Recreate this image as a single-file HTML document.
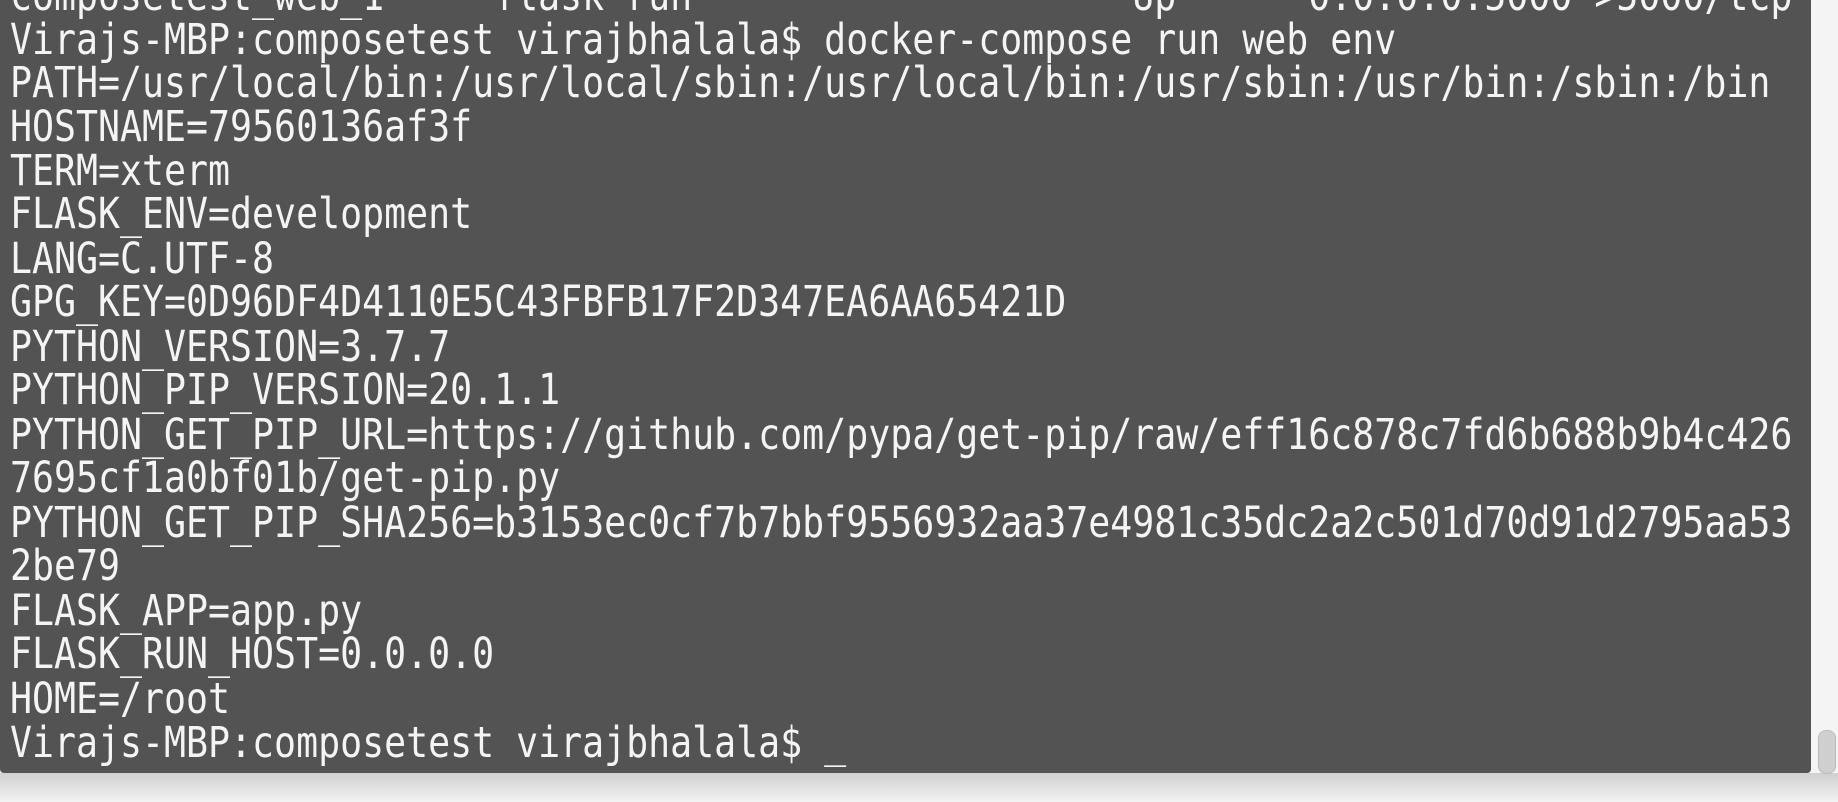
<!DOCTYPE html>
<html><head><meta charset="utf-8"><style>
html,body{margin:0;padding:0;width:1838px;height:802px;overflow:hidden;background:#e6e6e6;}
.bg{position:absolute;left:0;top:773px;width:1838px;height:29px;background:linear-gradient(#d0d0d0,#f2f2f2);}
.right{position:absolute;left:1811px;top:0;width:27px;height:773px;background:#f4f4f4;}
.thumb{position:absolute;left:1818px;top:730px;width:16px;height:42px;border-radius:8px;background:#cfcfcf;border:1px solid #bbb;}
.term{position:absolute;left:0;top:0;width:1811px;height:773px;background:#535353;border-radius:0 0 4px 4px;overflow:hidden;}
.l{position:absolute;left:10px;font-family:"DejaVu Sans Mono","Liberation Mono",monospace;font-size:43px;color:#f4f4f4;line-height:44px;white-space:pre;transform:scaleX(0.85);transform-origin:0 0;}
</style></head><body>
<div class="bg"></div>
<div class="right"></div>
<div class="thumb"></div>
<div class="term">
<div class="l" style="top:-26px">composetest_web_1     flask run                    Up      0.0.0.0:5000->5000/tcp</div>
<div class="l" style="top:18px">Virajs-MBP:composetest virajbhalala$ docker-compose run web env</div>
<div class="l" style="top:61px">PATH=/usr/local/bin:/usr/local/sbin:/usr/local/bin:/usr/sbin:/usr/bin:/sbin:/bin</div>
<div class="l" style="top:105px">HOSTNAME=79560136af3f</div>
<div class="l" style="top:149px">TERM=xterm</div>
<div class="l" style="top:192px">FLASK_ENV=development</div>
<div class="l" style="top:237px">LANG=C.UTF-8</div>
<div class="l" style="top:280px">GPG_KEY=0D96DF4D4110E5C43FBFB17F2D347EA6AA65421D</div>
<div class="l" style="top:325px">PYTHON_VERSION=3.7.7</div>
<div class="l" style="top:368px">PYTHON_PIP_VERSION=20.1.1</div>
<div class="l" style="top:413px">PYTHON_GET_PIP_URL=https://github.com/pypa/get-pip/raw/eff16c878c7fd6b688b9b4c426</div>
<div class="l" style="top:456px">7695cf1a0bf01b/get-pip.py</div>
<div class="l" style="top:501px">PYTHON_GET_PIP_SHA256=b3153ec0cf7b7bbf9556932aa37e4981c35dc2a2c501d70d91d2795aa53</div>
<div class="l" style="top:544px">2be79</div>
<div class="l" style="top:589px">FLASK_APP=app.py</div>
<div class="l" style="top:632px">FLASK_RUN_HOST=0.0.0.0</div>
<div class="l" style="top:677px">HOME=/root</div>
<div class="l" style="top:721px">Virajs-MBP:composetest virajbhalala$ _</div>
</div>
</body></html>
